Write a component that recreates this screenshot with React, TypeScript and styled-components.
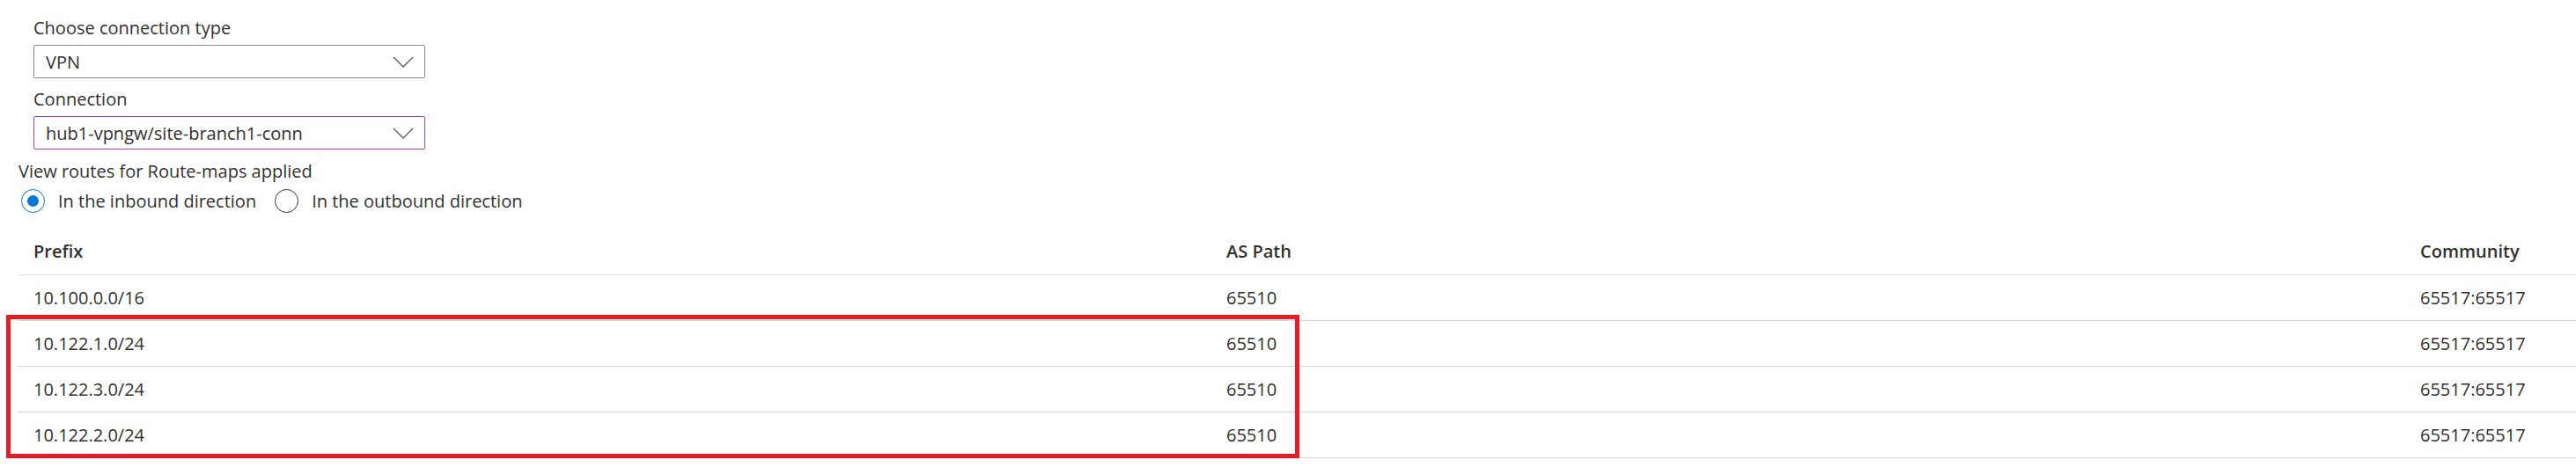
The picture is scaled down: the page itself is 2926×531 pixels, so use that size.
import React from "react";
import styled, { createGlobalStyle } from "styled-components";

const GlobalStyle = createGlobalStyle`
  html, body {
    margin: 0;
    padding: 0;
    background: #ffffff;
  }
  body {
    font-family: "Open Sans", "Noto Sans", "Liberation Sans", sans-serif;
    color: #323130;
  }
`;

const Page = styled.div`
  width: 2926px;
  box-sizing: border-box;
  padding: 19px 0 0 21px;
  display: flex;
  flex-direction: column;
`;

const FieldGroup = styled.div`
  display: flex;
  flex-direction: column;
  padding-left: 17px;
`;

const Label = styled.div<{ $gapTop?: number }>`
  font-size: 20px;
  line-height: 26px;
  margin-top: ${(p) => p.$gapTop ?? 0}px;
`;

const Dropdown = styled.div<{ $focused?: boolean }>`
  box-sizing: border-box;
  width: 445px;
  height: 38px;
  margin-top: 6px;
  border: 1px solid ${(p) => (p.$focused ? "#9a44c4" : "#8a8886")};
  border-radius: 2px;
  display: flex;
  align-items: center;
  justify-content: space-between;
  padding: 0 12px 0 13px;
  font-size: 20px;
  color: #323130;
`;

const Chevron = () => (
  <svg width="24" height="13" viewBox="0 0 24 13" aria-hidden>
    <polyline
      points="1,1 12,12 23,1"
      fill="none"
      stroke="#605e5c"
      strokeWidth="1.4"
    />
  </svg>
);

const SectionLabel = styled.div`
  font-size: 20px;
  line-height: 26px;
  margin-top: 12px;
`;

const RadioRow = styled.div`
  display: flex;
  align-items: center;
  margin-top: 7px;
  padding-left: 3px;
  gap: 21px;
`;

const RadioOption = styled.label`
  display: flex;
  align-items: center;
  gap: 15px;
  font-size: 20px;
  line-height: 26px;
`;

const RadioCircle = styled.span<{ $checked?: boolean }>`
  box-sizing: border-box;
  width: 27px;
  height: 27px;
  border-radius: 50%;
  border: 1.6px solid ${(p) => (p.$checked ? "#0078d4" : "#323130")};
  display: flex;
  align-items: center;
  justify-content: center;
  &::after {
    content: "";
    display: ${(p) => (p.$checked ? "block" : "none")};
    width: 13px;
    height: 13px;
    border-radius: 50%;
    background: #0078d4;
  }
`;

const TableWrap = styled.div`
  position: relative;
  margin-top: 16px;
`;

const Row = styled.div<{ $header?: boolean }>`
  display: grid;
  grid-template-columns: 1355px 1356px 1fr;
  height: ${(p) => (p.$header ? 54 : 51)}px;
  border-bottom: 1px solid ${(p) => (p.$header ? "#e4e2e0" : "#d6d4d2")};
  align-items: center;
`;

const Cell = styled.div<{ $header?: boolean }>`
  padding-left: 17px;
  font-size: 20px;
  font-weight: ${(p) => (p.$header ? 600 : 400)};
  color: #323130;
  white-space: nowrap;
`;

const Highlight = styled.div`
  position: absolute;
  left: -14px;
  top: 100px;
  width: 1469px;
  height: 163px;
  box-sizing: border-box;
  border: 5px solid #e81c24;
  pointer-events: none;
`;

const rows = [
  { prefix: "10.100.0.0/16", path: "65510", community: "65517:65517" },
  { prefix: "10.122.1.0/24", path: "65510", community: "65517:65517" },
  { prefix: "10.122.3.0/24", path: "65510", community: "65517:65517" },
  { prefix: "10.122.2.0/24", path: "65510", community: "65517:65517" },
];

export default function App() {
  return (
    <>
      <GlobalStyle />
      <Page>
        <FieldGroup>
          <Label>Choose connection type</Label>
          <Dropdown>
            <span>VPN</span>
            <Chevron />
          </Dropdown>
          <Label $gapTop={11}>Connection</Label>
          <Dropdown $focused>
            <span>hub1-vpngw/site-branch1-conn</span>
            <Chevron />
          </Dropdown>
        </FieldGroup>
        <SectionLabel>View routes for Route-maps applied</SectionLabel>
        <RadioRow>
          <RadioOption>
            <RadioCircle $checked />
            In the inbound direction
          </RadioOption>
          <RadioOption>
            <RadioCircle />
            In the outbound direction
          </RadioOption>
        </RadioRow>
        <TableWrap>
          <Row $header>
            <Cell $header>Prefix</Cell>
            <Cell $header>AS Path</Cell>
            <Cell $header>Community</Cell>
          </Row>
          {rows.map((r, i) => (
            <Row key={i}>
              <Cell>{r.prefix}</Cell>
              <Cell>{r.path}</Cell>
              <Cell>{r.community}</Cell>
            </Row>
          ))}
          <Highlight />
        </TableWrap>
      </Page>
    </>
  );
}
